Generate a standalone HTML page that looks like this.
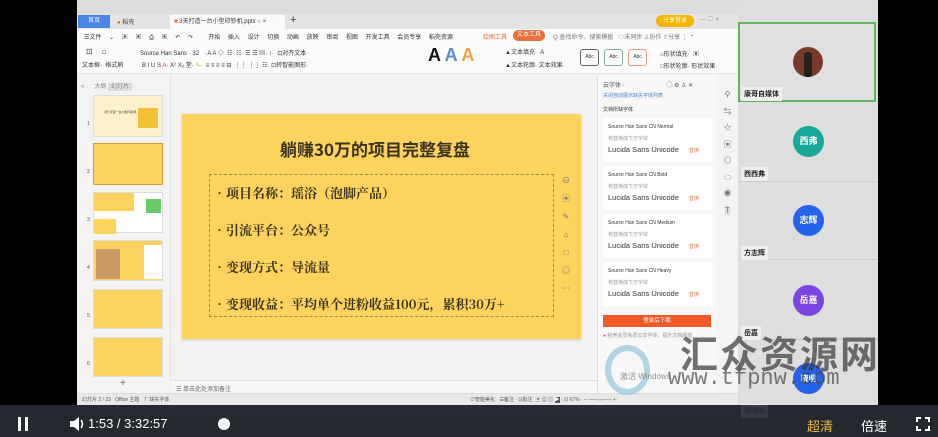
<!DOCTYPE html>
<html><head><meta charset="utf-8"><style>
*{margin:0;padding:0;box-sizing:border-box}
body{width:938px;height:437px;overflow:hidden;background:#000;position:relative;font-family:"Liberation Sans","Noto Sans CJK SC",sans-serif;font-size:6px;color:#333}
.a{position:absolute}
.t{white-space:nowrap}
</style></head><body>
<div class="a" style="left:77px;top:0;width:661px;height:405px;background:#f3f3f3"></div>
<div class="a" style="left:77px;top:0;width:661px;height:14px;background:#dcdcdc"></div>
<div class="a" style="left:77px;top:14px;width:661px;height:15px;background:#e4e4e4"></div>
<div class="a" style="left:78px;top:15px;width:32px;height:13px;background:#4a86e8;color:#fff;text-align:center;line-height:13px">首页</div>
<div class="a t" style="left:117px;top:17px;color:#444"><span style="color:#e53">●</span> 稻壳</div>
<div class="a t" style="left:170px;top:15px;width:115px;height:14px;background:#fafafa;line-height:14px;padding-left:4px"><span style="color:#e8703a">■</span> 3天打造一台小型印钞机.pptx ○ ×</div>
<div class="a t" style="left:290px;top:14px;font-size:11px">+</div>
<div class="a" style="left:656px;top:15px;width:38px;height:12px;border-radius:6px;background:#f5b400;color:#fff;line-height:12px;text-align:center">分享登录</div>
<div class="a t" style="left:700px;top:16px;color:#999">— ☐ ✕</div>
<div class="a" style="left:77px;top:29px;width:661px;height:45px;background:#fbfbfb;border-bottom:1px solid #e2e2e2"></div>
<div class="a t" style="left:84px;top:32px;word-spacing:6px">☰文件 ⌄ ▣ ▣ ⎙ ▣ ↶ ↷ &nbsp;开始 插入 设计 切换 动画 放映 审阅 视图 开发工具 会员专享 稻壳资源</div>
<div class="a t" style="left:483px;top:32px;color:#e8703a">绘图工具</div>
<div class="a" style="left:513px;top:30px;width:32px;height:11px;border-radius:6px;background:#e8703a;color:#fff;text-align:center;line-height:11px">文本工具</div>
<div class="a t" style="left:553px;top:32px;color:#777">Q 查找命令、搜索模板 &nbsp; ☁未同步 ♙协作 ⇪分享 ⋮ ⌃</div>
<div class="a t" style="left:86px;top:47px;font-size:8px">⊡ &nbsp;&nbsp; ⌂</div>
<div class="a t" style="left:82px;top:60px">文本框· &nbsp;格式刷</div>
<div class="a t" style="left:140px;top:48px">Source Han Sans · 32 &nbsp;&nbsp;· A A ◇ &nbsp;☷· ☷· ☰ ☰ ▤· ↕· &nbsp;⊡对齐文本·</div>
<div class="a t" style="left:142px;top:60px">B I U S <span style="color:#d33">A</span>· X² X₂ 堂· <span style="color:#e9b800">✎</span>· &nbsp;≡ ≡ ≡ ≡ ⊟ &nbsp;⋮⋮ ⋮⋮ ☷· ⊡转智能图形·</div>
<div class="a t" style="left:428px;top:45px;font-size:18px;font-weight:bold;color:#111">A <span style="color:#5b8fd6">A</span> <span style="color:#f0a040">A</span></div>
<div class="a t" style="left:505px;top:47px">▲文本填充· &nbsp;A</div>
<div class="a t" style="left:505px;top:60px">▲文本轮廓· 文本效果·</div>
<div class="a" style="left:580px;top:49px;width:19px;height:17px;border:1px solid #666;border-radius:3px;text-align:center;line-height:15px;font-size:5px">Abc</div>
<div class="a" style="left:604px;top:49px;width:19px;height:17px;border:1px solid #8aa;border-radius:3px;text-align:center;line-height:15px;font-size:5px">Abc</div>
<div class="a" style="left:628px;top:49px;width:19px;height:17px;border:1px solid #e0a080;border-radius:3px;text-align:center;line-height:15px;font-size:5px">Abc</div>
<div class="a t" style="left:660px;top:49px">⌂形状填充· &nbsp;▣</div>
<div class="a t" style="left:660px;top:61px">□形状轮廓· 形状效果·</div>
<div class="a" style="left:77px;top:75px;width:94px;height:305px;background:#f3f3f3;border-right:1px solid #e0e0e0"></div>
<div class="a t" style="left:81px;top:81px;color:#888">« &nbsp;&nbsp;&nbsp;&nbsp;&nbsp;大纲 <span style="background:#ddd;padding:1px 3px">幻灯片</span></div>
<div class="a" style="left:93px;top:95px;width:70px;height:42px;background:#fdf1cc;border:1px solid #ddd"><div class="a" style="left:44px;top:12px;width:20px;height:20px;background:#f4c136"></div><div class="a" style="left:10px;top:14px;font-size:3px">3天 打造一台小型印钞机</div></div>
<div class="a" style="left:93px;top:143px;width:70px;height:42px;background:#fcd35c;border:1px solid #d59a30"></div>
<div class="a" style="left:93px;top:192px;width:70px;height:41px;background:#fff;border:1px solid #ddd"><div class="a" style="left:0;top:0;width:40px;height:18px;background:#fcd35c"></div><div class="a" style="left:52px;top:6px;width:15px;height:14px;background:#6c6"></div><div class="a" style="left:0;top:26px;width:22px;height:15px;background:#fcd35c"></div></div>
<div class="a" style="left:93px;top:240px;width:70px;height:41px;background:#fcd35c;border:1px solid #ddd"><div class="a" style="left:2px;top:8px;width:24px;height:30px;background:#c96"></div><div class="a" style="left:50px;top:4px;width:18px;height:34px;background:#fff"></div></div>
<div class="a" style="left:93px;top:289px;width:70px;height:40px;background:#fcd35c;border:1px solid #ddd"></div>
<div class="a" style="left:93px;top:337px;width:70px;height:40px;background:#fcd35c;border:1px solid #ddd"></div>
<div class="a t" style="left:87px;top:100px;font-size:5px;line-height:48px;color:#555">1<br>2<br>3<br>4<br>5<br>6</div>
<div class="a" style="left:120px;top:378px;font-size:10px;color:#666">+</div>
<div class="a" style="left:172px;top:75px;width:425px;height:305px;background:#f2f2f2"></div>
<div class="a" style="left:182px;top:114px;width:399px;height:225px;background:#fcd35c;box-shadow:0 1px 3px #ccc"></div>
<div class="a t" style="left:280px;top:136px;font-size:17px;font-weight:bold;color:#3a3320;font-family:'Noto Sans CJK SC',sans-serif">躺赚30万的项目完整复盘</div>
<div class="a" style="left:209px;top:174px;width:345px;height:143px;border:1px dashed #9a8a55"></div>
<div class="a t" style="left:213px;top:174px;font-size:13px;line-height:37px;color:#3a3320;font-weight:bold;font-family:'Noto Serif CJK SC',serif">•项目名称：瑶浴（泡脚产品）<br>•引流平台：公众号<br>•变现方式：导流量<br>•变现收益：平均单个进粉收益100元，累积30万+</div>
<div class="a" style="left:559px;top:172px;width:14px;height:118px;font-size:8px;line-height:18px;text-align:center;color:#777">⊖<br>▣<br>✎<br>⌂<br>□<br>◎<br>⋯</div>
<div class="a" style="left:172px;top:380px;width:425px;height:13px;background:#f7f7f7;border-top:1px solid #ddd;color:#666;padding:3px 4px" >☰ 单击此处添加备注</div>
<div class="a" style="left:597px;top:75px;width:120px;height:322px;background:#f7f7f7;border-left:1px solid #ddd"></div>
<div class="a t" style="left:603px;top:80px;color:#555">云字体 · <span style="margin-left:40px">◯ ⚙ ♙ ✕</span></div>
<div class="a t" style="left:603px;top:92px;color:#4a7fd0;font-size:5px">关闭自动展示缺失字体列表</div>
<div class="a t" style="left:603px;top:106px;font-size:5px">文档所缺字体</div>
<div class="a" style="left:603px;top:118px;width:110px;height:220px;font-size:5px">
<div style="background:#fff;height:44px;padding:6px 5px;margin-bottom:4px"><div>Source Han Sans CN Normal</div><div style="color:#999;margin-top:5px">将替换成下方字体</div><div style="font-size:7.5px;margin-top:3px">Lucida Sans Unicode <span style="color:#e8703a;font-size:5px;margin-left:8px">替换</span></div></div>
<div style="background:#fff;height:44px;padding:6px 5px;margin-bottom:4px"><div>Source Han Sans CN Bold</div><div style="color:#999;margin-top:5px">将替换成下方字体</div><div style="font-size:7.5px;margin-top:3px">Lucida Sans Unicode <span style="color:#e8703a;font-size:5px;margin-left:8px">替换</span></div></div>
<div style="background:#fff;height:44px;padding:6px 5px;margin-bottom:4px"><div>Source Han Sans CN Medium</div><div style="color:#999;margin-top:5px">将替换成下方字体</div><div style="font-size:7.5px;margin-top:3px">Lucida Sans Unicode <span style="color:#e8703a;font-size:5px;margin-left:8px">替换</span></div></div>
<div style="background:#fff;height:44px;padding:6px 5px"><div>Source Han Sans CN Heavy</div><div style="color:#999;margin-top:5px">将替换成下方字体</div><div style="font-size:7.5px;margin-top:3px">Lucida Sans Unicode <span style="color:#e8703a;font-size:5px;margin-left:8px">替换</span></div></div>
</div>
<div class="a" style="left:603px;top:315px;width:108px;height:12px;background:#f05a28;color:#fff;text-align:center;line-height:12px;font-size:5.5px">登录后下载</div>
<div class="a t" style="left:603px;top:332px;color:#999;font-size:5px"><span style="color:#e53">●</span> 稻壳会员免费云享字体，提升文档颜值</div>
<div class="a" style="left:717px;top:75px;width:21px;height:322px;background:#f3f3f3;font-size:8px;line-height:16.5px;text-align:center;color:#777;padding-top:12px">⚲<br>⇆<br>☆<br>▣<br>◎<br>☁<br>◉<br><span style="background:#ddd">T</span></div>
<div class="a" style="left:77px;top:393px;width:661px;height:12px;background:#e9e9e9;border-top:1px solid #ddd"></div>
<div class="a t" style="left:82px;top:396px;font-size:5px;color:#555">幻灯片 2 / 23 &nbsp; Office 主题 &nbsp; ⊤ 缺失字体</div>
<div class="a t" style="left:470px;top:396px;font-size:5px;color:#555">⊙智能美化 · ☰备注 · ⊡批注 &nbsp;▣ ▦ ▥ <span style="background:#556;color:#fff">▶</span> · ⊡ 67% · − ——○—— +</div>
<div class="a" style="left:738px;top:0;width:140px;height:405px;background:#dedede"></div>
<div class="a" style="left:738px;top:22px;width:138px;height:80px;border:2px solid #5cb85c;background:#e0e0e0"></div>
<div class="a" style="left:793px;top:47px;width:30px;height:30px;border-radius:50%;background:#7a3a2a"><div class="a" style="left:11px;top:5px;width:8px;height:25px;background:#222;border-radius:3px"></div></div>
<div class="a t" style="left:741px;top:87px;background:#eee;padding:2px 3px;font-size:7px;font-weight:bold;color:#222">康哥自媒体</div>
<div class="a" style="left:738px;top:181px;width:140px;height:1px;background:#ccc"></div>
<div class="a" style="left:738px;top:259px;width:140px;height:1px;background:#ccc"></div>
<div class="a" style="left:738px;top:339px;width:140px;height:1px;background:#ccc"></div>
<div class="a" style="left:793px;top:126px;width:31px;height:31px;border-radius:50%;background:#16a99a;color:#fff;text-align:center;line-height:31px;font-size:9px;font-weight:bold">西弗</div>
<div class="a" style="left:793px;top:205px;width:31px;height:31px;border-radius:50%;background:#2563e8;color:#fff;text-align:center;line-height:31px;font-size:9px;font-weight:bold">志辉</div>
<div class="a" style="left:793px;top:285px;width:31px;height:31px;border-radius:50%;background:#7a45e0;color:#fff;text-align:center;line-height:31px;font-size:9px;font-weight:bold">岳嘉</div>
<div class="a" style="left:793px;top:363px;width:31px;height:31px;border-radius:50%;background:#2563e8;color:#fff;text-align:center;line-height:31px;font-size:8px;font-weight:bold">晓明</div>
<div class="a t" style="left:741px;top:167px;background:#eee;padding:2px 3px;font-size:7px;font-weight:bold;color:#222">西西弗</div>
<div class="a t" style="left:741px;top:246px;background:#eee;padding:2px 3px;font-size:7px;font-weight:bold;color:#222">方志辉</div>
<div class="a t" style="left:741px;top:326px;background:#eee;padding:2px 3px;font-size:7px;font-weight:bold;color:#222">岳嘉</div>
<div class="a t" style="left:741px;top:404px;background:#eee;padding:2px 3px;font-size:7px;font-weight:bold;color:#222">郭晓明</div>
<div class="a t" style="left:680px;top:324px;font-size:38px;font-weight:bold;color:rgba(60,60,60,0.72);font-family:'Noto Sans CJK SC',sans-serif;letter-spacing:2px">汇众资源网</div>
<div class="a t" style="left:668px;top:366px;font-size:22px;color:rgba(70,70,70,0.7);font-family:'Liberation Mono',monospace">www.tfpnw.com</div>
<div class="a" style="left:605px;top:345px;width:45px;height:50px;border-radius:50%;border:6px solid rgba(90,170,210,0.45)"></div>
<div class="a t" style="left:620px;top:371px;font-size:8px;color:rgba(120,120,120,0.8)">激活 Windows</div>
<div class="a" style="left:77px;top:405px;width:661px;height:10px;background:#1c2230"></div>
<div class="a" style="left:0;top:405px;width:938px;height:32px;background:rgba(40,43,50,0.92)"></div>
<div class="a" style="left:18px;top:417px;width:3px;height:14px;background:#fff"></div>
<div class="a" style="left:25px;top:417px;width:3px;height:14px;background:#fff"></div>
<svg class="a" style="left:68px;top:415px" width="18" height="18" viewBox="0 0 18 18"><path d="M2 6h4l5-4v14l-5-4H2z" fill="#fff"/><path d="M13 5q3 4 0 8" stroke="#fff" stroke-width="1.5" fill="none"/></svg>
<div class="a t" style="left:88px;top:416px;color:#fff;font-size:13px">1:53 / 3:32:57</div>
<div class="a" style="left:218px;top:418px;width:12px;height:12px;border-radius:50%;background:#fff"></div>
<div class="a t" style="left:807px;top:416px;color:#e8b84a;font-size:13px">超清</div>
<div class="a t" style="left:861px;top:416px;color:#fff;font-size:13px">倍速</div>
<svg class="a" style="left:916px;top:417px" width="14" height="14" viewBox="0 0 14 14" fill="none" stroke="#fff" stroke-width="2"><path d="M1 5V1h4M9 1h4v4M13 9v4H9M5 13H1V9"/></svg>
</body></html>
